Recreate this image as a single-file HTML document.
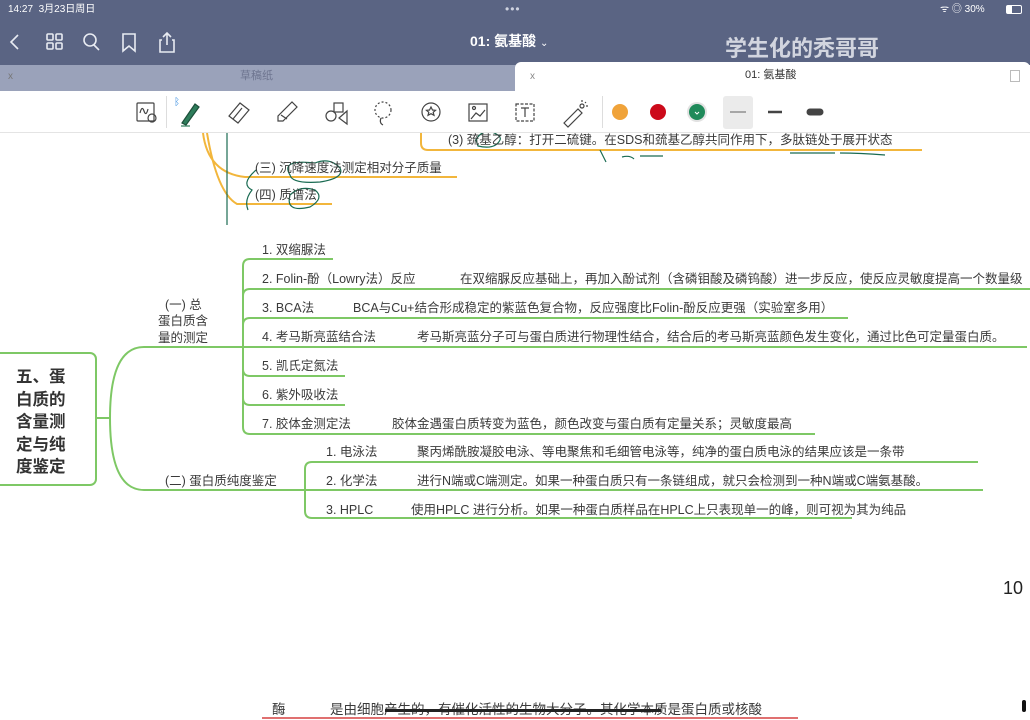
<!DOCTYPE html>
<html><head><meta charset="utf-8">
<style>
*{margin:0;padding:0;box-sizing:border-box}
body{width:1030px;height:720px;overflow:hidden;background:#fff;position:relative;font-family:"Liberation Sans","Noto Sans CJK SC",sans-serif;color:#333}
.a{position:absolute;white-space:nowrap;line-height:1}
.t{font-size:12.5px;color:#3a3a3a}
</style></head><body>
<div class="a" style="left:0;top:0;width:1030px;height:65px;background:#5a6483"></div>
<div class="a" style="left:8px;top:5px;font-size:10px;color:#fff">14:27&nbsp; 3月23日周日</div>
<div class="a" style="left:505px;top:3px;font-size:12px;color:#cfd3e0;letter-spacing:1px">•••</div>
<div class="a" style="left:940px;top:5px;font-size:10px;color:#fff">ᯤ ◎ 30%</div>
<div class="a" style="left:1006px;top:5px;width:16px;height:9px;border:1px solid #fff;border-radius:2px"><div style="width:5px;height:7px;background:#fff"></div></div>
<svg class="a" style="left:0;top:25px" width="200" height="35" viewBox="0 0 200 35" fill="none" stroke="#e8ebf2" stroke-width="1.6">
<path d="M18 10 L11 17 L18 24"/>
<rect x="47" y="9" width="6" height="6" rx="1"/><rect x="56" y="9" width="6" height="6" rx="1"/><rect x="47" y="18" width="6" height="6" rx="1"/><rect x="56" y="18" width="6" height="6" rx="1"/>
<circle cx="90" cy="15" r="6"/><path d="M94 20 L99 25"/>
<path d="M123 9 H135 V26 L129 21 L123 26 Z"/>
<path d="M162 15 H160 V27 H174 V15 H172 M167 8 V20 M163 12 L167 8 L171 12"/>
</svg>
<div class="a" style="left:470px;top:34px;font-size:14px;color:#fff;font-weight:bold">01: 氨基酸 <span style="font-size:10px;font-weight:normal">⌄</span></div>
<div class="a" style="left:725px;top:38px;font-size:22px;color:#dfe2ea;font-weight:bold;opacity:.9">学生化的秃哥哥</div>
<div class="a" style="left:0;top:65px;width:520px;height:26px;background:#9aa2ba"></div>
<div class="a" style="left:8px;top:72px;font-size:10px;color:#777">x</div>
<div class="a" style="left:240px;top:71px;font-size:11px;color:#6e7590">草稿纸</div>
<div class="a" style="left:515px;top:62px;width:515px;height:29px;background:#fff;border-radius:6px 6px 0 0"></div>
<div class="a" style="left:530px;top:72px;font-size:10px;color:#888">x</div>
<div class="a" style="left:745px;top:70px;font-size:11px;color:#333">01: 氨基酸</div>
<div class="a" style="left:1010px;top:70px;width:10px;height:12px;border:1px solid #bbb"></div>
<div class="a" style="left:0;top:91px;width:1030px;height:42px;background:#fff;border-bottom:1px solid #e4e4e4"></div>
<div class="a" style="left:166px;top:96px;width:1px;height:32px;background:#ddd"></div>
<div class="a" style="left:602px;top:96px;width:1px;height:32px;background:#ddd"></div>
<div class="a" style="left:723px;top:96px;width:30px;height:33px;background:#ebebeb;border-radius:3px"></div>
<svg class="a" style="left:0;top:91px" width="1030" height="42" viewBox="0 0 1030 42" fill="none" stroke="#444" stroke-width="1.2">
<rect x="137" y="12" width="17" height="18" rx="1"/><path d="M140 22 q2 -8 4 -2 q2 6 4 -2"/><circle cx="152" cy="27" r="4"/>
<path d="M182 32 L195 13 L199 16 L186 34 Z" fill="#2e7d5b" stroke="#1d4f3a"/><path d="M181 35 H190" stroke="#2e7d5b"/>
<text x="174" y="14" font-size="10" fill="#3b8fe0" stroke="none">ᛒ</text>
<path d="M229 25 L240 12 L249 19 L238 32 Z M233 28 L242 17"/>
<path d="M278 30 L278 25 L292 11 L297 16 L283 30 Z M281 24 L287 28"/>
<rect x="334" y="12" width="9" height="9"/><circle cx="331" cy="25" r="5"/><path d="M347 20 V33 L339 27 Z"/>
<circle cx="383" cy="19" r="8" stroke-dasharray="2 2"/><path d="M381 27 q-2 5 2 7"/>
<circle cx="431" cy="21" r="9"/><path d="M431 16 l1.5 3 3 .3 -2.3 2 .8 3 -3 -1.6 -3 1.6 .8 -3 -2.3 -2 3 -.3 z"/>
<rect x="469" y="13" width="18" height="17"/><path d="M471 28 L476 22 L480 25 L485 19"/><circle cx="474" cy="17" r="1.5"/>
<rect x="516" y="13" width="18" height="17" stroke-dasharray="3 1.5"/><path d="M521 17 H529 M525 17 V26"/>
<path d="M564 32 L578 18 L582 22 L568 36 Z"/><circle cx="582" cy="15" r="2"/><path d="M582 9 V11 M588 15 H586 M586 11 L585 12"/>
<circle cx="620" cy="21" r="8" fill="#f0a33a" stroke="none"/>
<circle cx="658" cy="21" r="8" fill="#cc0a1a" stroke="none"/>
<circle cx="697" cy="21" r="10" fill="#e2e2e2" stroke="none"/><circle cx="697" cy="21" r="8" fill="#1f8a5a" stroke="none"/><path d="M695 21 l2 2 2 -2" stroke="#fff" stroke-width="1"/>
<path d="M730 21 H746" stroke="#777" stroke-width="1.2"/>
<path d="M768 21 H782" stroke="#444" stroke-width="2.5"/>
<path d="M810 21 H820" stroke="#444" stroke-width="7" stroke-linecap="round"/>
</svg>
<svg class="a" style="left:0;top:133px" width="1030" height="500" viewBox="0 133 1030 500" fill="none">
<g stroke="#f2b63c" stroke-width="2">
<path d="M421 133 V143 q0 7 7 7 H922"/>
<path d="M203 133 q5 40 42 44 H457"/>
<path d="M207 133 q10 60 30 71 H332"/>
</g>
<g stroke="#1a6b52" stroke-width="1.2">
<path d="M227 133 V225"/>
<path d="M600 150 L606 162"/>
<path d="M256 170 q-16 14 -4 20 q-8 10 -4 20"/>
<path d="M290 175 q-10 -16 25 -12 q15 -6 25 5 q5 10 -20 14 q-28 2 -30 -7 z"/>
<path d="M290 195 q10 -10 25 -5 q10 8 -5 17 q-25 6 -20 -12 z"/>
<path d="M476 140 q5 -10 16 -8 q10 4 8 8 q-5 10 -22 6 z"/>
<path d="M622 157 q8 -2 12 2 M640 156 H663 M790 153 H835 M840 153 q20 0 45 2"/>
</g>
<g stroke="#7ec865" stroke-width="2">
<rect x="-6" y="353" width="102" height="132" rx="6"/>
<path d="M96 418 H110"/>
<path d="M110 418 q0 -71 34 -71 H243"/>
<path d="M110 418 q0 72 34 72 H305"/>
<path d="M333 259 H250 q-7 0 -7 7 V427 q0 7 7 7 H815"/>
<path d="M243 296 q0 -7 7 -7 H1030"/>
<path d="M243 325 q0 -7 7 -7 H848"/>
<path d="M243 347 H1027"/>
<path d="M243 369 q0 7 7 7 H345"/>
<path d="M243 398 q0 7 7 7 H345"/>
<path d="M978 462 H312 q-7 0 -7 7 V511 q0 7 7 7 H852"/>
<path d="M305 490 H983"/>
</g>
<path d="M0 634 H1030" stroke="#d6d6d6" stroke-width="2"/>
<path d="M0 638 H1030" stroke="#eeeeee" stroke-width="4"/>
</svg>
<div class="a t" style="left:448px;top:134px">(3) 巯基乙醇：打开二硫键。在SDS和巯基乙醇共同作用下，多肽链处于展开状态</div>
<div class="a t" style="left:255px;top:162px">(三) 沉降速度法测定相对分子质量</div>
<div class="a t" style="left:255px;top:189px">(四) 质谱法</div>
<div class="a" style="left:16px;top:366px;font-size:16.5px;font-weight:bold;color:#333;line-height:22.5px;white-space:normal;width:60px">五、蛋<br>白质的<br>含量测<br>定与纯<br>度鉴定</div>
<div class="a t" style="left:165px;top:299px">(一) 总</div>
<div class="a t" style="left:158px;top:315px">蛋白质含</div>
<div class="a t" style="left:158px;top:332px">量的测定</div>
<div class="a t" style="left:165px;top:475px">(二) 蛋白质纯度鉴定</div>
<div class="a t" style="left:262px;top:244px">1. 双缩脲法</div>
<div class="a t" style="left:262px;top:273px">2. Folin-酚（Lowry法）反应</div>
<div class="a t" style="left:460px;top:273px">在双缩脲反应基础上，再加入酚试剂（含磷钼酸及磷钨酸）进一步反应，使反应灵敏度提高一个数量级</div>
<div class="a t" style="left:262px;top:302px">3. BCA法</div>
<div class="a t" style="left:353px;top:302px">BCA与Cu+结合形成稳定的紫蓝色复合物，反应强度比Folin-酚反应更强（实验室多用）</div>
<div class="a t" style="left:262px;top:331px">4. 考马斯亮蓝结合法</div>
<div class="a t" style="left:417px;top:331px">考马斯亮蓝分子可与蛋白质进行物理性结合，结合后的考马斯亮蓝颜色发生变化，通过比色可定量蛋白质。</div>
<div class="a t" style="left:262px;top:360px">5. 凯氏定氮法</div>
<div class="a t" style="left:262px;top:389px">6. 紫外吸收法</div>
<div class="a t" style="left:262px;top:418px">7. 胶体金测定法</div>
<div class="a t" style="left:392px;top:418px">胶体金遇蛋白质转变为蓝色，颜色改变与蛋白质有定量关系；灵敏度最高</div>
<div class="a t" style="left:326px;top:446px">1. 电泳法</div>
<div class="a t" style="left:417px;top:446px">聚丙烯酰胺凝胶电泳、等电聚焦和毛细管电泳等，纯净的蛋白质电泳的结果应该是一条带</div>
<div class="a t" style="left:326px;top:475px">2. 化学法</div>
<div class="a t" style="left:417px;top:475px">进行N端或C端测定。如果一种蛋白质只有一条链组成，就只会检测到一种N端或C端氨基酸。</div>
<div class="a t" style="left:326px;top:504px">3. HPLC</div>
<div class="a t" style="left:411px;top:504px">使用HPLC 进行分析。如果一种蛋白质样品在HPLC上只表现单一的峰，则可视为其为纯品</div>
<div class="a" style="left:1003px;top:579px;font-size:18px;color:#222">10</div>
<div class="a" style="left:272px;top:703px;font-size:13.5px;color:#3a3a3a">酶</div>
<div class="a" style="left:330px;top:703px;font-size:13.5px;color:#3a3a3a">是由细胞产生的，有催化活性的生物大分子。其化学本质是蛋白质或核酸</div>
<div class="a" style="left:385px;top:709px;width:276px;height:3px;background:#222"></div>
<div class="a" style="left:262px;top:717px;width:536px;height:2px;background:#e07070"></div>
<div class="a" style="left:1022px;top:700px;width:4px;height:12px;background:#111;border-radius:2px"></div>
</body></html>
